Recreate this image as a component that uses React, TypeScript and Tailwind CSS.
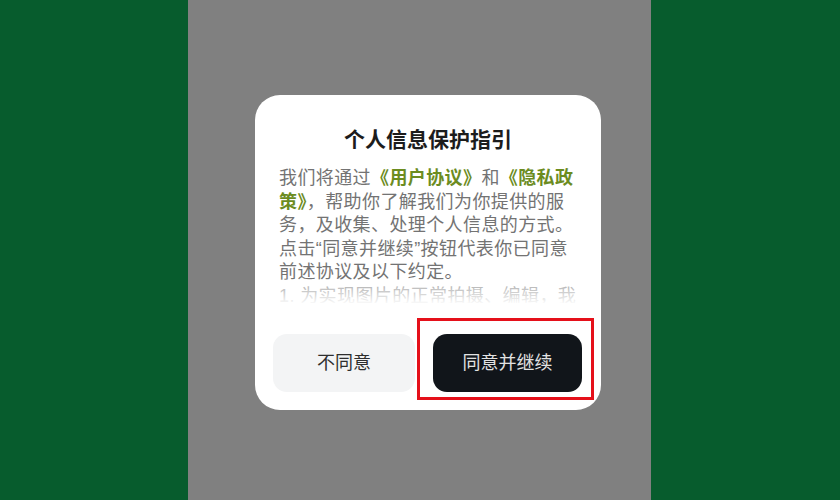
export default function App() {
  return (
    <div
      className="flex h-[500px] w-[840px] bg-[#075c2d]"
      style={{ fontFamily: '"Liberation Sans", "Noto Sans CJK SC", sans-serif' }}
    >
      <div className="ml-[188px] h-full w-[463px] bg-[#808080] pl-[67px] pt-[95px]">
        {/* Dialog */}
        <div className="relative flex w-[346px] flex-col rounded-[25px] bg-white px-[18px] pb-[18px] pt-[30px]">
          <h2 className="text-center text-[21px] font-bold leading-[30px] text-[#1c1c1c]">个人信息保护指引</h2>

          <div className="relative mt-[12px] h-[136px] overflow-hidden px-[6px]">
            <p className="text-[18px] leading-[23.5px] tracking-[0.4px] text-[#737373]">
              我们将通过<span className="font-bold text-[#6c8c1f]">《用户协议》</span>和<span className="font-bold text-[#6c8c1f]">《隐私政策》</span>，帮助你了解我们为你提供的服务，及收集、处理个人信息的方式。点击“同意并继续”按钮代表你已同意前述协议及以下约定。
              <br />
              1. 为实现图片的正常拍摄、编辑，我们需要获取你的相机和存储权限。
            </p>
            <div className="pointer-events-none absolute bottom-0 left-0 right-0 h-[24px] bg-gradient-to-b from-white/30 to-white/95" />
          </div>

          <div className="mt-[31px] flex gap-[18px]">
            <button className="h-[58px] w-[142px] rounded-[14px] bg-[#f3f4f5] text-[18px] text-[#2e2e2e]">不同意</button>
            <button className="h-[58px] w-[149px] rounded-[14px] bg-[#11151a] text-[18px] text-[#e2e2e2]">同意并继续</button>
          </div>

          {/* annotation */}
          <div className="pointer-events-none absolute left-[162px] top-[223px] h-[82px] w-[177px] border-[3px] border-[#e5101a]" />
        </div>
      </div>
    </div>
  );
}
